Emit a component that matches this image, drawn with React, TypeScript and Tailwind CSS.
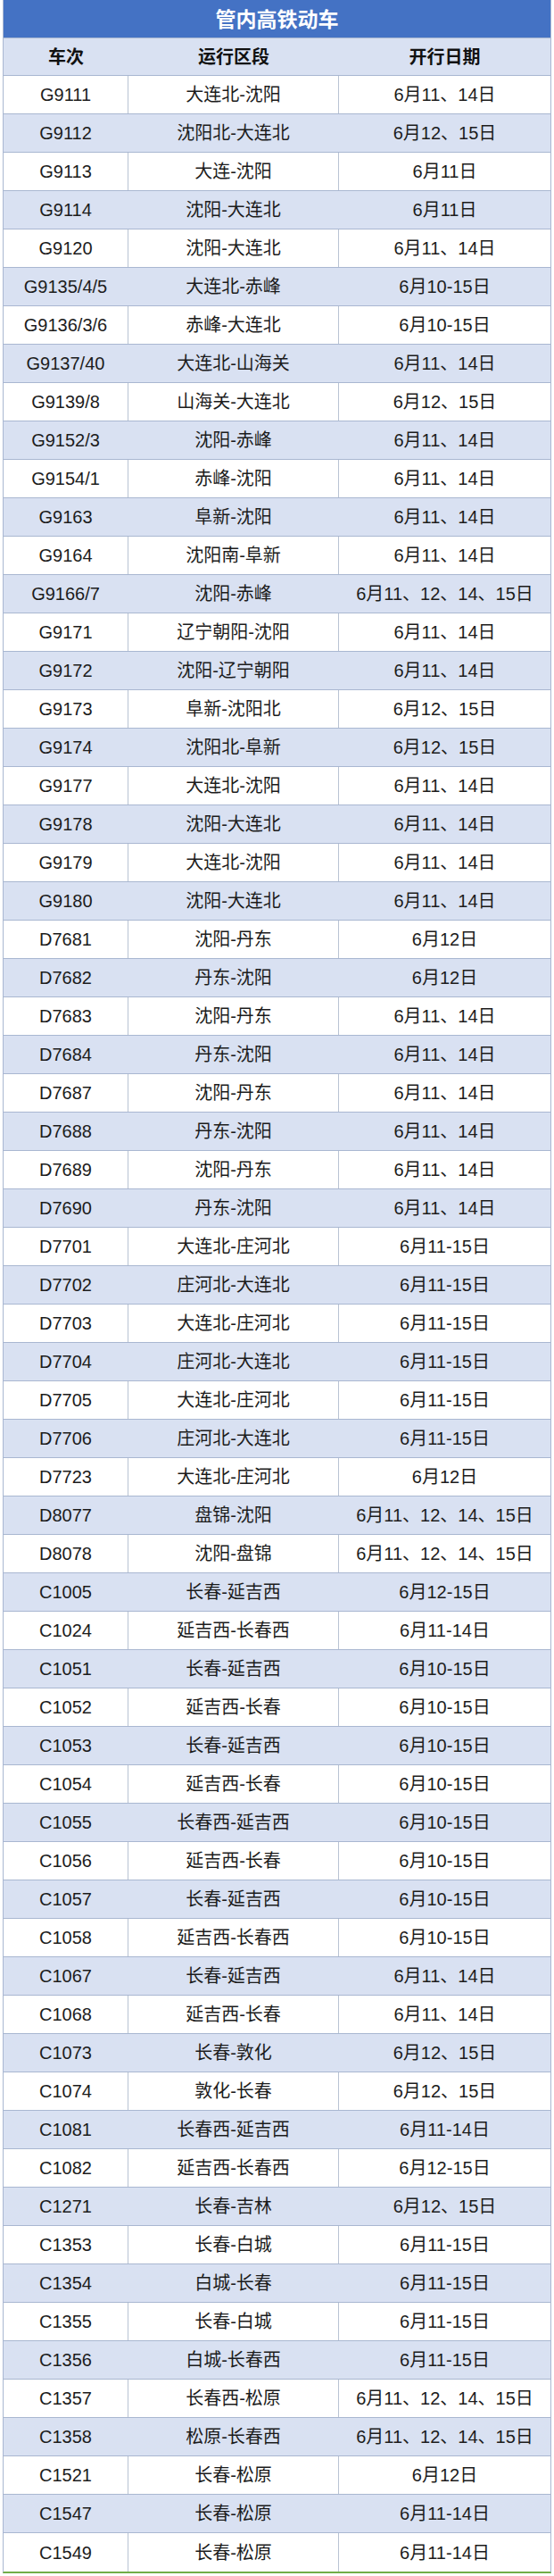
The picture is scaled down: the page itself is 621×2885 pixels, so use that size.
type Train = [string, string, string];

const trains: Train[] = [
    ['G9111', '大连北-沈阳', '6月11、14日'],
    ['G9112', '沈阳北-大连北', '6月12、15日'],
    ['G9113', '大连-沈阳', '6月11日'],
    ['G9114', '沈阳-大连北', '6月11日'],
    ['G9120', '沈阳-大连北', '6月11、14日'],
    ['G9135/4/5', '大连北-赤峰', '6月10-15日'],
    ['G9136/3/6', '赤峰-大连北', '6月10-15日'],
    ['G9137/40', '大连北-山海关', '6月11、14日'],
    ['G9139/8', '山海关-大连北', '6月12、15日'],
    ['G9152/3', '沈阳-赤峰', '6月11、14日'],
    ['G9154/1', '赤峰-沈阳', '6月11、14日'],
    ['G9163', '阜新-沈阳', '6月11、14日'],
    ['G9164', '沈阳南-阜新', '6月11、14日'],
    ['G9166/7', '沈阳-赤峰', '6月11、12、14、15日'],
    ['G9171', '辽宁朝阳-沈阳', '6月11、14日'],
    ['G9172', '沈阳-辽宁朝阳', '6月11、14日'],
    ['G9173', '阜新-沈阳北', '6月12、15日'],
    ['G9174', '沈阳北-阜新', '6月12、15日'],
    ['G9177', '大连北-沈阳', '6月11、14日'],
    ['G9178', '沈阳-大连北', '6月11、14日'],
    ['G9179', '大连北-沈阳', '6月11、14日'],
    ['G9180', '沈阳-大连北', '6月11、14日'],
    ['D7681', '沈阳-丹东', '6月12日'],
    ['D7682', '丹东-沈阳', '6月12日'],
    ['D7683', '沈阳-丹东', '6月11、14日'],
    ['D7684', '丹东-沈阳', '6月11、14日'],
    ['D7687', '沈阳-丹东', '6月11、14日'],
    ['D7688', '丹东-沈阳', '6月11、14日'],
    ['D7689', '沈阳-丹东', '6月11、14日'],
    ['D7690', '丹东-沈阳', '6月11、14日'],
    ['D7701', '大连北-庄河北', '6月11-15日'],
    ['D7702', '庄河北-大连北', '6月11-15日'],
    ['D7703', '大连北-庄河北', '6月11-15日'],
    ['D7704', '庄河北-大连北', '6月11-15日'],
    ['D7705', '大连北-庄河北', '6月11-15日'],
    ['D7706', '庄河北-大连北', '6月11-15日'],
    ['D7723', '大连北-庄河北', '6月12日'],
    ['D8077', '盘锦-沈阳', '6月11、12、14、15日'],
    ['D8078', '沈阳-盘锦', '6月11、12、14、15日'],
    ['C1005', '长春-延吉西', '6月12-15日'],
    ['C1024', '延吉西-长春西', '6月11-14日'],
    ['C1051', '长春-延吉西', '6月10-15日'],
    ['C1052', '延吉西-长春', '6月10-15日'],
    ['C1053', '长春-延吉西', '6月10-15日'],
    ['C1054', '延吉西-长春', '6月10-15日'],
    ['C1055', '长春西-延吉西', '6月10-15日'],
    ['C1056', '延吉西-长春', '6月10-15日'],
    ['C1057', '长春-延吉西', '6月10-15日'],
    ['C1058', '延吉西-长春西', '6月10-15日'],
    ['C1067', '长春-延吉西', '6月11、14日'],
    ['C1068', '延吉西-长春', '6月11、14日'],
    ['C1073', '长春-敦化', '6月12、15日'],
    ['C1074', '敦化-长春', '6月12、15日'],
    ['C1081', '长春西-延吉西', '6月11-14日'],
    ['C1082', '延吉西-长春西', '6月12-15日'],
    ['C1271', '长春-吉林', '6月12、15日'],
    ['C1353', '长春-白城', '6月11-15日'],
    ['C1354', '白城-长春', '6月11-15日'],
    ['C1355', '长春-白城', '6月11-15日'],
    ['C1356', '白城-长春西', '6月11-15日'],
    ['C1357', '长春西-松原', '6月11、12、14、15日'],
    ['C1358', '松原-长春西', '6月11、12、14、15日'],
    ['C1521', '长春-松原', '6月12日'],
    ['C1547', '长春-松原', '6月11-14日'],
    ['C1549', '长春-松原', '6月11-14日'],
];

const App = () => {
    return (
        <div
            className="w-[621px] bg-white px-[3px] pb-[3px]"
            style={{ fontFamily: '"Liberation Sans", "Noto Sans CJK SC", sans-serif' }}
        >
            <div className="border-x border-[#a9b7d1] border-b-2 border-b-[#70ad47]">
                {/* 标题 */}
                <div className="h-[42px] flex items-center justify-center bg-[#4472c4] text-white text-[23px] font-bold pt-[3px]">
                    管内高铁动车
                </div>

                {/* 表头 */}
                <div className="grid grid-cols-[140px_236px_1fr] h-[43px] bg-[#d9e1f2] border-y border-[#a9b7d1] text-[20px] font-bold text-[#111]">
                    <div className="flex items-center justify-center">车次</div>
                    <div className="flex items-center justify-center">运行区段</div>
                    <div className="flex items-center justify-center">开行日期</div>
                </div>

                {/* 数据行 */}
                {trains.map(([code, route, dates], i) => {
                    const banded = i % 2 === 1;
                    const last = i === trains.length - 1;
                    return (
                        <div
                            key={code}
                            className={`grid grid-cols-[140px_236px_1fr] h-[43px] text-[20px] text-[#1c1c1c] ${last ? '' : 'border-b border-[#a9b7d1]'} ${banded ? 'bg-[#d9e1f2]' : 'bg-white'}`}
                        >
                            <div className={`flex items-center justify-center border-r ${banded ? 'border-[#d9e1f2]' : 'border-[#b9c3d3]'}`}>{code}</div>
                            <div className={`flex items-center justify-center border-r ${banded ? 'border-[#d9e1f2]' : 'border-[#b9c3d3]'}`}>{route}</div>
                            <div className="flex items-center justify-center">{dates}</div>
                        </div>
                    );
                })}
            </div>
        </div>
    );
};

export default App;
